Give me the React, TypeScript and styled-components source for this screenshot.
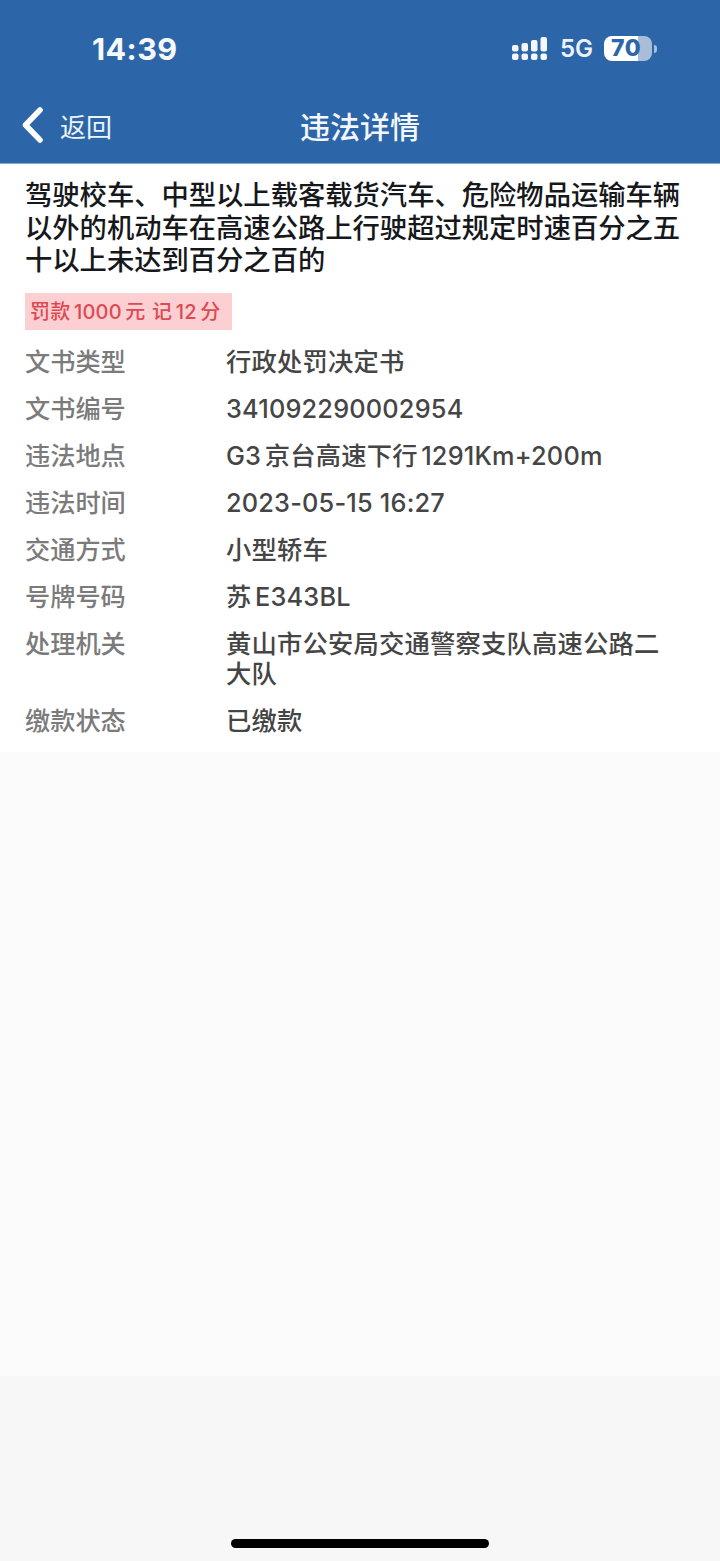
import * as React from "react";
import styled, { createGlobalStyle } from "styled-components";

const GlobalStyle = createGlobalStyle`
    html, body {
        margin: 0;
        padding: 0;
        background: #f7f7f7;
        font-family: "Liberation Sans", "Noto Sans CJK SC", sans-serif;
    }
`;

const CJK = `"Inter", "Noto Sans CJK SC", sans-serif`;

const Page = styled.div`
    width: 720px;
    height: 1561px;
    display: flex;
    flex-direction: column;
    overflow: hidden;
`;

// Blue header with status bar and nav bar
const Header = styled.header`
    height: 164px;
    flex: none;
    background: #2c66a9;
    border-bottom: 1px solid #8fa9c9;
    box-sizing: border-box;
    color: #fff;
`;

const StatusBar = styled.div`
    height: 92px;
    padding: 5px 63px 0 92px;
    box-sizing: border-box;
    display: flex;
    align-items: center;
    justify-content: space-between;
`;

const Clock = styled.div`
    font-family: "Inter", sans-serif;
    font-weight: 700;
    font-size: 30.5px;
    letter-spacing: 0.4px;
    color: #f6f8fb;
`;

const StatusRight = styled.div`
    display: flex;
    align-items: center;
`;

const Network = styled.span`
    font-family: "Inter", sans-serif;
    font-weight: 600;
    font-size: 24px;
    margin: 0 11px 0 12px;
    color: #eef2f8;
`;

const Battery = styled.div`
    width: 48px;
    height: 25px;
    border-radius: 8px;
    background: linear-gradient(to right, #fff 0, #fff 71%, #a9bdd8 71%, #a9bdd8 100%);
    color: #2c66a9;
    font-family: "Inter", sans-serif;
    font-weight: 800;
    font-size: 23px;
    line-height: 25px;
    padding-left: 7px;
    box-sizing: border-box;
    letter-spacing: 0.5px;
`;

const BatteryNub = styled.div`
    width: 3px;
    height: 8px;
    margin-left: 2px;
    border-radius: 0 3px 3px 0;
    background: #a9bdd8;
`;

const NavBar = styled.nav`
    height: 66px;
    display: grid;
    grid-template-columns: 1fr auto 1fr;
    align-items: center;
`;

const BackButton = styled.div`
    display: flex;
    align-items: center;
    padding-left: 22px;
    gap: 16px;
`;

const BackLabel = styled.span`
    font-family: ${CJK};
    font-size: 26px;
    color: #eef3f9;
`;

const NavTitle = styled.h1`
    margin: 0;
    font-family: ${CJK};
    font-weight: 500;
    font-size: 30px;
    color: #f4f7fb;
`;

// Violation card
const Card = styled.section`
    height: 588px;
    flex: none;
    background: #fff;
    padding: 16px 25px 0 25px;
    box-sizing: border-box;
`;

const Title = styled.h2`
    margin: 0;
    font-family: ${CJK};
    font-weight: 500;
    font-size: 27.3px;
    line-height: 32.5px;
    color: #16181b;
`;

const Penalty = styled.div`
    margin: 15px 0 0;
    width: 207px;
    height: 37px;
    background: #fcd0d2;
    color: #dd4a52;
    font-family: ${CJK};
    font-weight: 500;
    font-size: 20px;
    line-height: 38px;
    padding-left: 5px;
    box-sizing: border-box;
    white-space: nowrap;
    word-spacing: 1px;
    letter-spacing: 0.2px;
`;

const Thin = styled.span`
    display: inline-block;
    width: 3.5px;
`;

const Rows = styled.dl`
    margin: 9px 0 0;
    display: flex;
    flex-direction: column;
`;

const Row = styled.div`
    display: grid;
    grid-template-columns: 201px 1fr;
    padding: 8px 0 8.5px;
`;

const Label = styled.dt`
    font-family: ${CJK};
    font-weight: 500;
    font-size: 25.2px;
    line-height: 30.5px;
    color: #7b7b7b;
`;

const Value = styled.dd`
    margin: 0;
    font-family: ${CJK};
    font-weight: 500;
    font-size: 25.3px;
    line-height: 30.5px;
    letter-spacing: 0.2px;
    color: #454545;
    max-width: 440px;
`;

const Blank = styled.div`
    height: 624px;
    flex: none;
    background: #fbfbfb;
`;

const Footer = styled.div`
    flex: 1;
    background: #f7f7f7;
    display: flex;
    justify-content: center;
    align-items: flex-end;
    padding-bottom: 13px;
`;

const HomeBar = styled.div`
    width: 258px;
    height: 9px;
    border-radius: 5px;
    background: #000;
`;

const SignalIcon = () => (
    <svg width="36" height="26" viewBox="0 0 36 26" fill="#f4f7fb">
        <rect x="0" y="9" width="6.5" height="6.5" rx="2" />
        <rect x="0" y="17.5" width="6.5" height="6.5" rx="2" />
        <rect x="9.5" y="7" width="6.5" height="8.5" rx="2" />
        <rect x="9.5" y="17.5" width="6.5" height="6.5" rx="2" />
        <rect x="19" y="4" width="6.5" height="11.5" rx="2" />
        <rect x="19" y="17.5" width="6.5" height="6.5" rx="2" />
        <rect x="28.5" y="1" width="6.5" height="14.5" rx="2" />
        <rect x="28.5" y="17.5" width="6.5" height="6.5" rx="2" />
    </svg>
);

const BackIcon = () => (
    <svg width="22" height="36" viewBox="0 0 22 36" fill="none" stroke="#fff" strokeWidth="5.5" strokeLinecap="round" strokeLinejoin="round">
        <path d="M18 3 L3.500 18 L18 33" />
    </svg>
);

// Thin gap the reference shows between Chinese and Latin runs
const spaced = (text: string) =>
    text.split("|").map((part, i) => (
        <React.Fragment key={i}>
            {i > 0 && <Thin />}
            {part}
        </React.Fragment>
    ));

const DETAILS: [string, string][] = [
    ["文书类型", "行政处罚决定书"],
    ["文书编号", "341092290002954"],
    ["违法地点", "G3|京台高速下行|1291Km+200m"],
    ["违法时间", "2023-05-15 16:27"],
    ["交通方式", "小型轿车"],
    ["号牌号码", "苏|E343BL"],
    ["处理机关", "黄山市公安局交通警察支队高速公路二大队"],
    ["缴款状态", "已缴款"],
];

const App = () => (
    <Page>
        <GlobalStyle />
        <Header>
            <StatusBar>
                <Clock>14:39</Clock>
                <StatusRight>
                    <SignalIcon />
                    <Network>5G</Network>
                    <Battery>70</Battery>
                    <BatteryNub />
                </StatusRight>
            </StatusBar>
            <NavBar>
                <BackButton>
                    <BackIcon />
                    <BackLabel>返回</BackLabel>
                </BackButton>
                <NavTitle>违法详情</NavTitle>
            </NavBar>
        </Header>
        <Card>
            <Title>驾驶校车、中型以上载客载货汽车、危险物品运输车辆以外的机动车在高速公路上行驶超过规定时速百分之五十以上未达到百分之百的</Title>
            <Penalty>{spaced("罚款|1000|元 记|12|分")}</Penalty>
            <Rows>
                {DETAILS.map(([label, value]) => (
                    <Row key={label}>
                        <Label>{label}</Label>
                        <Value>{spaced(value)}</Value>
                    </Row>
                ))}
            </Rows>
        </Card>
        <Blank />
        <Footer>
            <HomeBar />
        </Footer>
    </Page>
);

export default App;
